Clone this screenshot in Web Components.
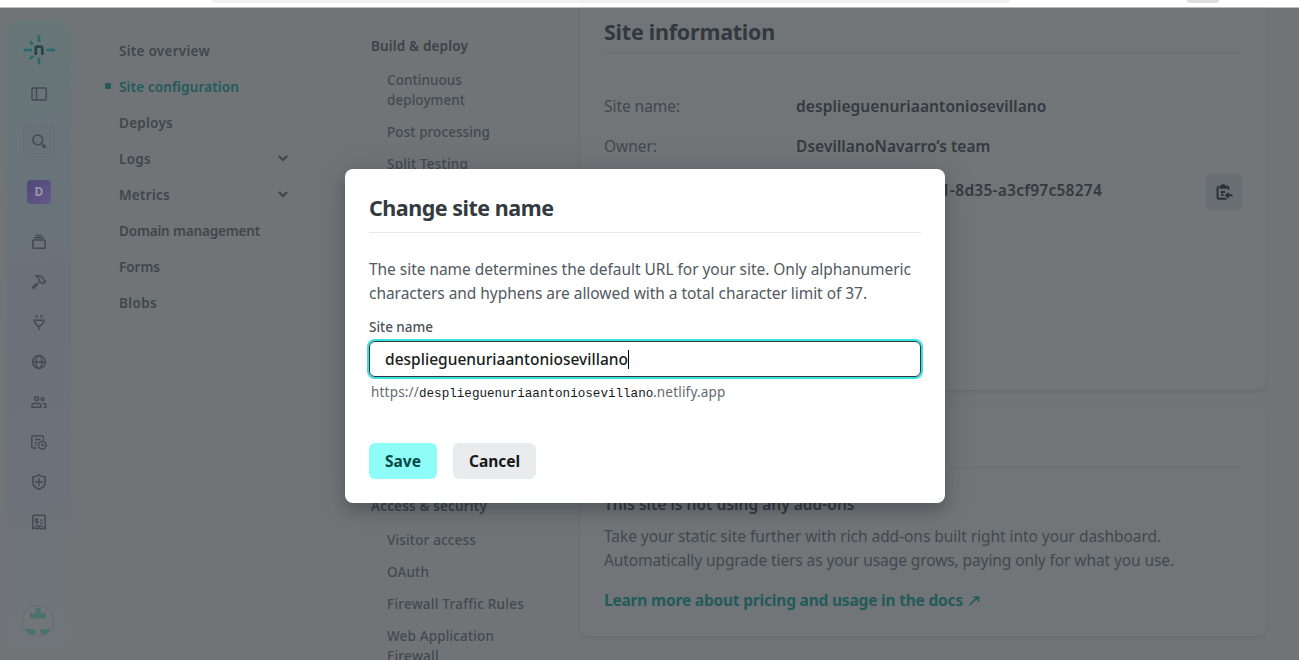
<!DOCTYPE html>
<html lang="en">
<head>
<meta charset="utf-8">
<title>Site configuration</title>
<style>
html,body{margin:0;height:100%;overflow:hidden}
body{font-family:"Noto Sans","Open Sans",sans-serif;background:#707477}
</style>
</head>
<body>
<site-app></site-app>
<script>
const define = (name, html, after) => customElements.define(name, class extends HTMLElement {
  connectedCallback() {
    if (this.shadowRoot) return;
    const root = this.attachShadow({mode: 'open'});
    const t = document.createElement('template');
    t.innerHTML = typeof html === 'function' ? html(this) : html;
    root.append(t.content.cloneNode(true));
    if (after) after(this, root);
  }
});

/* One line of text, tracked to take up the width given in "w". */
define('fit-text', `<style>:host{display:inline-block;white-space:nowrap}span{display:inline-block}</style><span><slot></slot></span>`,
  (el, root) => {
    const w = +el.getAttribute('w'), s = root.querySelector('span'), n = el.textContent.length;
    el.style.width = w + 'px';
    s.style.letterSpacing = ((w - s.getBoundingClientRect().width) / n).toFixed(3) + 'px';
  });

const icons = {
  panel: '<rect x="1" y="2" width="14.200" height="12" rx="1"/><path d="M5.500 2v12"/>',
  search: '<circle cx="6.800" cy="6.800" r="4.900"/><path d="M10.300 10.500l1 1"/><path d="M11.600 11.800l2.800 2.800" stroke-width="2.800"/>',
  stack: '<rect x="1.800" y="6" width="12.400" height="8.200" rx="1"/><path d="M3 3.700h10M4.600 1.400h6.800"/>',
  hammer: '<path d="M1.600 14.400l4.800-4.800" stroke-width="2.800"/><path d="M7 9l1.800-1.600M5.200 2c3.200-.8 5.600.2 7 2.200.6.9.3 1.700.9 2.400.4.400.9.400 1.400.9l-2.300 2.300c-.5-.7-.9-1.200-2-1.100C8 8.200 8.200 5 7.300 3.800 6.700 2.900 6 2.500 5.200 2z"/>',
  plug: '<path d="M5.600 .8v2.900M10.400 .8v2.900" stroke-width="1.800"/><path d="M3.200 6.200h9.600v1.500L9.500 12h-3L3.200 7.700zM8 12v4M2.300 6.200h11.400"/>',
  globe: '<circle cx="8" cy="8" r="6.400"/><ellipse cx="8" cy="8" rx="2.900" ry="6.400"/><path d="M1.800 8h12.400"/>',
  team: '<circle cx="5.500" cy="4.500" r="2"/><circle cx="11.600" cy="5.200" r="1.400"/><path d="M1 13.300V11c0-1 .6-1.600 1.600-1.600h5.600c1 0 1.600.6 1.600 1.600v2.300zM11.800 9.400h1.700c1 0 1.500.600 1.500 1.500v2.400h-2.600"/>',
  log: '<path d="M5 14H2.300c-1 0-1.500-.5-1.500-1.300V3c0-.8.500-1.300 1.300-1.300h9c.8 0 1.300.5 1.300 1.300v2.600M4 5.500h5.500M4 8.800h2.200M4 11.500h1"/><circle cx="11.300" cy="11.200" r="3.900"/><path d="M11.300 9v2.400h2"/>',
  shield: '<path d="M8 .9c1.800 1.300 3.700 2 6.200 2.100V8c0 3.500-2.600 5.900-6.200 7.200C4.400 13.900 1.800 11.500 1.800 8V3C4.300 2.900 6.200 2.200 8 .9zM8 4v8M4 8h8"/>',
  bill: '<path d="M1.800 14.900V2.300c0-.6.400-1 1-1h10.400c.6 0 1 .4 1 1v12.600l-2.100-1-2 1-2.100-1-2.100 1-2-1z"/><path d="M4.400 12h7.200M9 6.100h3M9 9.200h3M7 5H5.200c-1 0-1 1.900 0 1.900h.8c1.200 0 1.200 2 0 2H4.400M5.700 4v6" stroke-width="1.300"/>',
  copy: '<path d="M6 14.700H2.600c-.7 0-1.100-.4-1.100-1.100V4c0-.8.500-1.300 1.300-1.300M11 2.700c1 0 1.500.5 1.500 1.300v1.800M5 8h4M5 10.800h2.500M10.500 14.700H5" stroke-width="1.900"/><path d="M3.500 1.500h1.500L6 .3h2.200l1 1.200h1.600v3.200H3.500z" fill="currentColor" stroke="none"/><path d="M16.500 11.300h-4" stroke-width="2"/><path d="M12.800 7.900v6.800L8.700 11.300z" fill="currentColor" stroke="none"/>'
};
define('ui-icon', el => `<style>:host{display:block;width:16px;height:16px}svg{display:block;overflow:visible}</style>
<svg width="16" height="16" viewBox="0 0 16 16" fill="none" stroke="currentColor" stroke-width="1.500">${icons[el.getAttribute('name')]}</svg>`);

define('browser-edge', `<style>:host{display:flex;height:7px;background:#fff;border-bottom:1px solid #bcbebf;align-items:flex-start;padding-left:212px;box-sizing:content-box}
i{height:3px;border-radius:0 0 4px 4px}.u{width:798px;background:#f1f1f2}.m{width:32px;background:#dedede;margin-left:177px}</style><i class="u"></i><i class="m"></i>`);

define('icon-rail', `<style>
:host{display:flex;flex-direction:column;align-items:center;box-sizing:border-box;width:64px;height:632px;margin:12px 0 0 7px;border-radius:14px;color:#454a51;
background:linear-gradient(170deg,#677677 0%,#69747a 25%,#6b717a 42%,#6c717a 72%,#6e7478 82%,#6f7578 100%)}
.logo{margin-top:14px;width:32px;height:32px}.logo svg{display:block}
.a{margin-top:20px}
.s{margin-top:22px;width:32px;height:32px;border-radius:5px;background:#68727a;box-shadow:0 0 0 1px #657076 inset;display:flex;align-items:center;justify-content:center;position:relative;top:1px}
.d{margin:24px 0 1px;width:24px;height:24px;border-radius:4px;background:linear-gradient(135deg,#504779,#645a8b);color:#9798a6;font:bold 12px/24px "Noto Sans",sans-serif;text-align:center}
.i{margin-top:29px;display:flex;flex-direction:column;gap:24px}
.v{margin:75px 2px 0 0;width:32px;height:32px}
</style>
<div class="logo"><svg width="32" height="32" viewBox="0 0 32 32" fill="none" stroke="#276a6b" stroke-width="2.600"><path d="M16 1v7M16 23.500v7M.5 16H9M23.500 16H32M7.200 7.700L10 10.500M7.200 25l2.800-3.300"/><path d="M12.800 21v-9M12.800 12.700h4.700c1.300 0 1.800.7 1.800 1.800V21" stroke="#264347" stroke-width="2.700"/></svg></div>
<ui-icon class="a" name="panel"></ui-icon>
<div class="s"><ui-icon name="search"></ui-icon></div>
<div class="d">D</div>
<div class="i"><ui-icon name="stack"></ui-icon><ui-icon name="hammer"></ui-icon><ui-icon name="plug"></ui-icon><ui-icon name="globe"></ui-icon><ui-icon name="team"></ui-icon><ui-icon name="log"></ui-icon><ui-icon name="shield"></ui-icon><ui-icon name="bill"></ui-icon></div>
<svg class="v" viewBox="0 0 32 32"><defs><clipPath id="c"><circle cx="16" cy="16" r="15.500"/></clipPath></defs><circle cx="16" cy="16" r="15.500" fill="#727679" stroke="#676c6f"/><path clip-path="url(#c)" fill="#4a736e" d="M13.500 3h5v5H24v5.500H8V8h5.500zM0 24h13.500v5.500H0zM18.500 24H32v5.500H18.500z"/></svg>`);

define('nav-item', el => `<style>:host{display:flex;align-items:center;height:36px;color:#40464b;font-weight:650;font-size:13.500px;line-height:20px}
:host([active]){color:#235a5a}
i{width:6px;height:6px;border-radius:1px;margin:0 8px 2px 0}:host([active]) i{background:#235a5a}
svg{margin:0 1px 2px auto}</style><i></i><fit-text w="${el.getAttribute('w')}">${el.textContent}</fit-text>${el.hasAttribute('open') ? '<svg width="10" height="8" viewBox="0 0 10 8" fill="none" stroke="currentColor" stroke-width="2.300"><path d="M.8 2L5 6l4.200-4"/></svg>' : ''}`);

define('site-nav', `<style>:host{display:block;width:184px;margin:25px 0 0 34px}</style>
<nav-item w="91">Site overview</nav-item><nav-item active w="120">Site configuration</nav-item><nav-item w="54">Deploys</nav-item><nav-item open w="32">Logs</nav-item><nav-item open w="51">Metrics</nav-item><nav-item w="141">Domain management</nav-item><nav-item w="41">Forms</nav-item><nav-item w="38">Blobs</nav-item>`);

define('section-nav', `<style>:host{display:flex;flex-direction:column;width:160px;margin:28px 0 0 82px;font-size:13.500px;line-height:20px;font-weight:550;color:#43494f}
b{display:block;font-weight:650;color:#3c4247;margin-bottom:14px}div{margin:0 0 12px 16px}div fit-text{display:block}b.n{margin-top:310px}</style>
<b><fit-text w="97">Build &amp; deploy</fit-text></b>
<div><fit-text w="75">Continuous</fit-text><fit-text w="78">deployment</fit-text></div>
<div><fit-text w="103">Post processing</fit-text></div><div><fit-text w="81">Split Testing</fit-text></div>
<b class="n"><fit-text w="116">Access &amp; security</fit-text></b>
<div><fit-text w="89">Visitor access</fit-text></div><div><fit-text w="42">OAuth</fit-text></div><div><fit-text w="137">Firewall Traffic Rules</fit-text></div>
<div><fit-text w="107">Web Application</fit-text><fit-text w="52">Firewall</fit-text></div>`);

define('ui-card', `<style>:host{display:block;box-sizing:border-box;width:686px;padding:0 24px;border-radius:8px;background:#717578;box-shadow:0 0 1px rgba(30,40,46,.14),0 2px 4px rgba(30,40,46,.07)}</style><slot></slot>`);

define('site-panels', `<style>
:host{display:block;margin-left:49px;font-size:15.500px;line-height:24px;color:#42484e}
.one{height:382px;border-radius:0 0 8px 8px}.two{height:229px;margin-top:17px}
h2{margin:0;padding:8px 0 5px;height:32px;border-bottom:1px solid #6a6f72;font-size:21.500px;line-height:32px;color:#32383d}
b{font-weight:650;color:#34393e}
.r{display:grid;grid-template-columns:192px 1fr;height:40px;align-items:center}.first{margin-top:32px}
.id{display:flex;height:48px;align-items:center;padding-left:337px;justify-content:space-between}
button{all:unset;width:36px;height:36px;border-radius:6px;background:#696e72;color:#292f33;display:flex;align-items:center;justify-content:center;margin-top:4px}button ui-icon{margin-right:1px}
.bar{height:60px;border-bottom:1px solid #6a6f72;margin-bottom:24px}
.t,.p,.l{display:block}.p{margin-top:8px}.p fit-text{display:block}.l{margin-top:16px;color:#235a5a;font-weight:700;display:flex;align-items:center;gap:6px}
</style>
<ui-card class="one"><h2><fit-text w="171">Site information</fit-text></h2>
<div class="r first"><fit-text w="76">Site name:</fit-text><b><fit-text w="250.500">desplieguenuriaantoniosevillano</fit-text></b></div>
<div class="r"><fit-text w="53">Owner:</fit-text><b><fit-text w="194.500">DsevillanoNavarro’s team</fit-text></b></div>
<div class="id"><b><fit-text w="161">1-8d35-a3cf97c58274</fit-text></b><button aria-label="Copy"><ui-icon name="copy"></ui-icon></button></div></ui-card>
<ui-card class="two"><div class="bar"></div>
<b class="t"><fit-text w="250.500">This site is not using any add-ons</fit-text></b>
<div class="p"><fit-text w="557">Take your static site further with rich add-ons built right into your dashboard.</fit-text><fit-text w="570">Automatically upgrade tiers as your usage grows, paying only for what you use.</fit-text></div>
<div class="l"><fit-text w="359">Learn more about pricing and usage in the docs</fit-text><svg width="11" height="11" viewBox="0 0 11 11" fill="none" stroke="currentColor" stroke-width="1.700"><path d="M.6 10l8-7.600M4 2h5.500v5"/></svg></div></ui-card>`);

define('rename-dialog', `<style>
:host{position:absolute;left:345px;top:169px;box-sizing:border-box;width:600px;height:334px;border-radius:8px;background:#fff;padding:23px 24px;color:#525960;font-size:15.500px;line-height:24px;box-shadow:0 8px 14px rgba(14,22,28,.22),0 2px 36px rgba(14,22,28,.1)}
h2{margin:0;height:40px;border-bottom:1px solid #e6e8e9;font-size:21.500px;line-height:32px;color:#333a40}
.p{margin-top:24px}.p fit-text{display:block}
label{display:block;margin-top:12px;font-size:13.500px;line-height:20px;font-weight:550;color:#4c535a}
.in{box-sizing:border-box;height:36px;margin-top:4px;border:1px solid #2d3940;border-radius:6px;box-shadow:0 0 0 2px #35e2df;display:flex;align-items:center;padding-left:15px;color:#181c20;font-weight:530}
.in i{width:1px;height:19px;background:#000}
.h{display:flex;margin:5px 0 0 2px;height:20px;font-size:13.500px;line-height:20px;color:#636a71}
code{font:12.600px/24px "Liberation Mono",monospace;color:#15191c;width:234px}
.b{display:flex;gap:16px;margin-top:41px}button{all:unset;height:36px;padding:0 16px;border-radius:6px;font-weight:700;line-height:33px;background:#e9ebed;color:#15181b}.s{background:#8ffdf7;color:#064849}
button fit-text{display:block}
</style>
<h2><fit-text w="184.500">Change site name</fit-text></h2>
<div class="p"><fit-text w="542">The site name determines the default URL for your site. Only alphanumeric</fit-text><fit-text w="498">characters and hyphens are allowed with a total character limit of 37.</fit-text></div>
<label><fit-text w="64">Site name</fit-text></label>
<div class="in"><fit-text w="243">desplieguenuriaantoniosevillano</fit-text><i></i></div>
<div class="h"><fit-text w="48">https://</fit-text><code>desplieguenuriaantoniosevillano</code><fit-text w="72.500">.netlify.app</fit-text></div>
<div class="b"><button class="s"><fit-text w="36">Save</fit-text></button><button><fit-text w="51">Cancel</fit-text></button></div>`);

define('site-app', `<style>:host{display:block;position:relative;width:1299px;height:660px;overflow:hidden;background:#707477}
main{display:flex;align-items:flex-start}</style>
<browser-edge></browser-edge><main><icon-rail></icon-rail><site-nav></site-nav><section-nav></section-nav><site-panels></site-panels></main><rename-dialog></rename-dialog>`);
</script>
</body>
</html>
